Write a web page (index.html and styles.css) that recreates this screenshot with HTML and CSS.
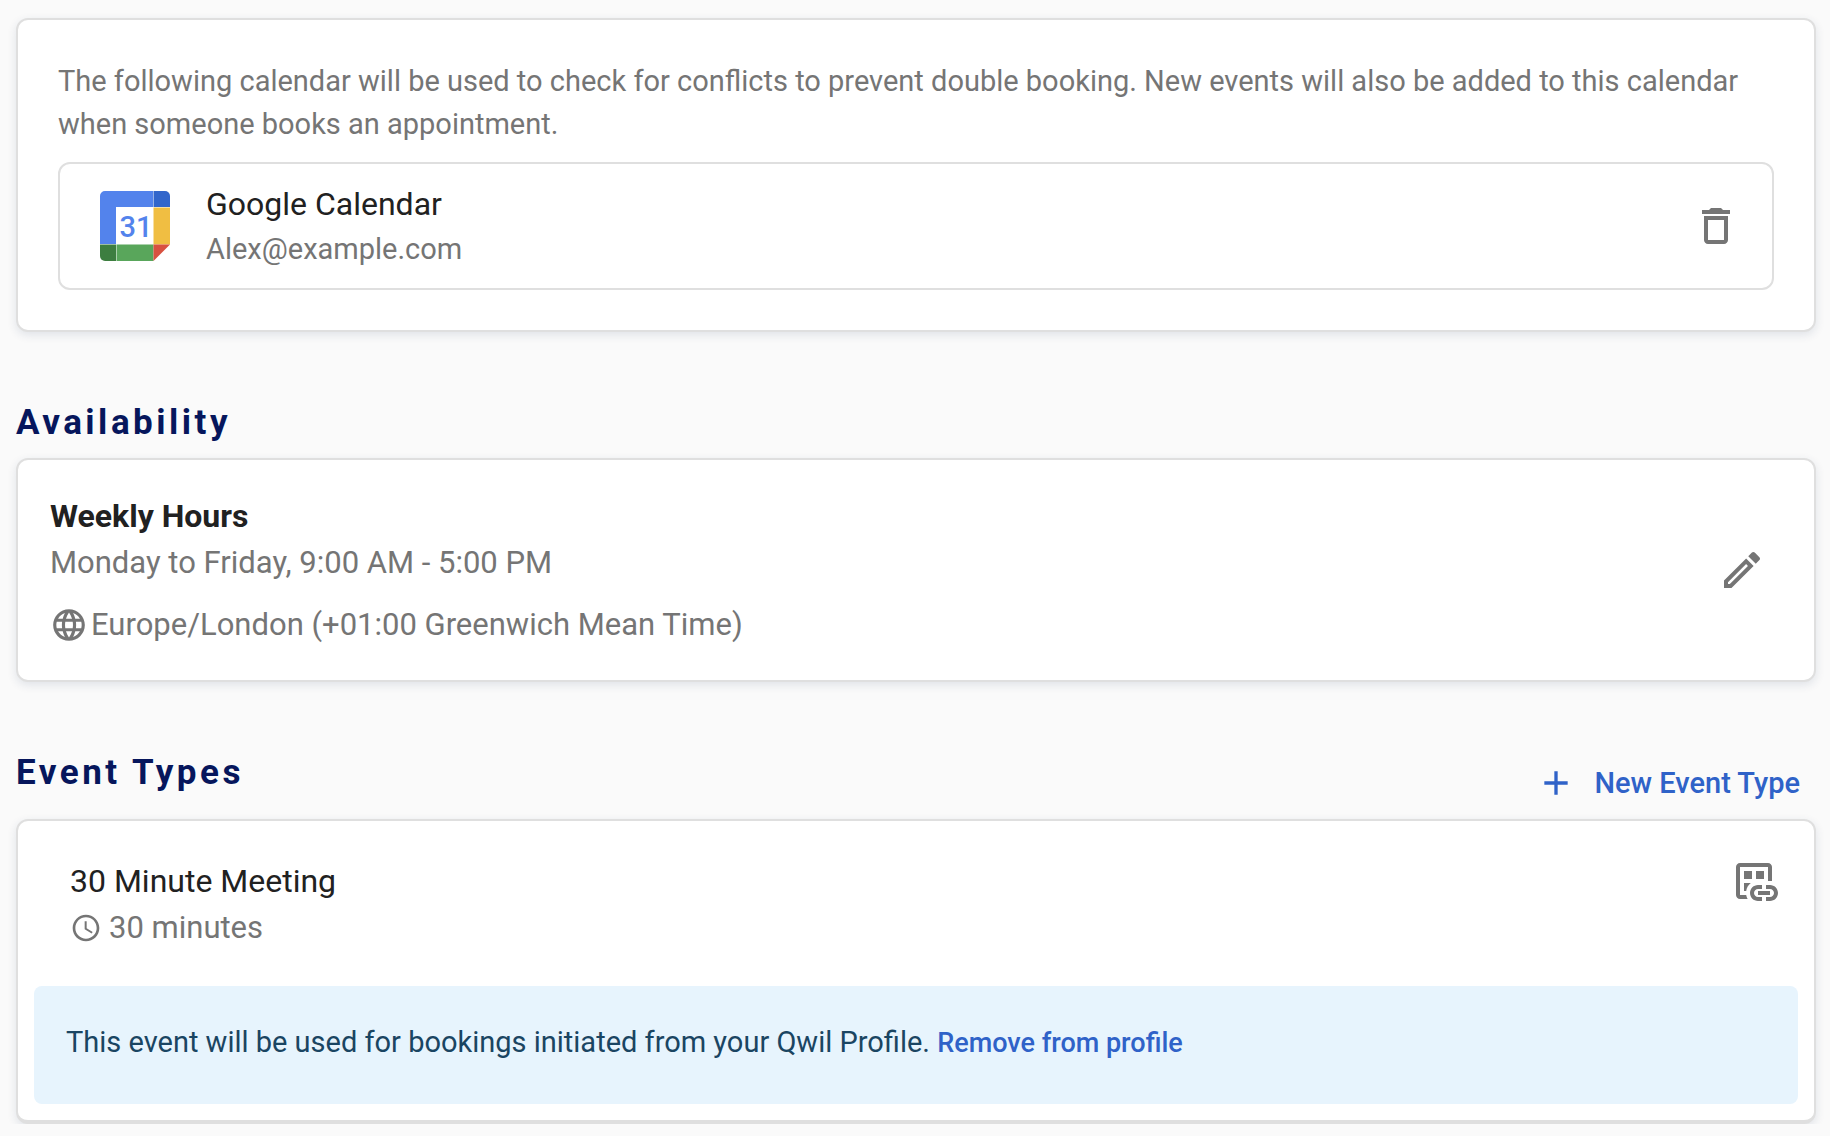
FILE: index.html
```html
<!DOCTYPE html>
<html lang="en">
<head>
<meta charset="UTF-8" />
<meta name="viewport" content="width=device-width, initial-scale=1" />
<title>Scheduling settings</title>
<link rel="stylesheet" href="styles.css">
</head>
<body>
<main class="page">

  <!-- Connected calendar -->
  <section class="card calendar-card">
    <p class="description">The following calendar will be used to check for conflicts to prevent double booking. New events will also be added to this calendar when someone books an appointment.</p>
    <div class="calendar-item">
      <svg class="calendar-logo" viewBox="0 0 70 70" aria-hidden="true">
        <path fill="#5383ec" d="M5 0h48v16H16v37H0V5a5 5 0 0 1 5-5z"/>
        <path fill="#3266cb" d="M53.5 0H65a5 5 0 0 1 5 5v11H53.5z"/>
        <path fill="#f0be42" d="M53.5 16.5H70v37H53.5z"/>
        <path fill="#3d7e40" d="M0 53.5h16V70H5a5 5 0 0 1-5-5z"/>
        <path fill="#59a65b" d="M16.5 53.5h37V70h-37z"/>
        <path fill="#d85140" d="M53.5 53.5H70L53.5 70z"/>
        <text x="36" y="46" text-anchor="middle" class="calendar-logo-day">31</text>
      </svg>
      <div class="calendar-info">
        <div class="title">Google Calendar</div>
        <div class="calendar-email">Alex@example.com</div>
      </div>
      <button type="button" class="icon-button" aria-label="Remove calendar">
        <svg class="icon" viewBox="0 0 24 24"><path d="M6 19c0 1.1.9 2 2 2h8c1.1 0 2-.9 2-2V7H6v12zM8 9h8v10H8V9zm7.5-5l-1-1h-5l-1 1H5v2h14V4z"/></svg>
      </button>
    </div>
  </section>

  <!-- Availability -->
  <div class="section-header">
    <h2>Availability</h2>
  </div>
  <section class="card availability-card">
    <div>
      <h3 class="title bold">Weekly Hours</h3>
      <div class="detail">Monday to Friday, 9:00 AM - 5:00 PM</div>
      <div class="detail timezone">
        <svg class="icon icon-globe" viewBox="0 0 24 24" aria-hidden="true"><path d="M11.99 2C6.47 2 2 6.48 2 12s4.47 10 9.99 10C17.52 22 22 17.52 22 12S17.52 2 11.99 2zm6.93 6h-2.95c-.32-1.25-.78-2.45-1.38-3.56 1.84.63 3.37 1.91 4.33 3.56zM12 4.04c.83 1.2 1.48 2.53 1.91 3.96h-3.82c.43-1.43 1.08-2.76 1.91-3.96zM4.26 14C4.1 13.36 4 12.69 4 12s.1-1.36.26-2h3.38c-.08.66-.14 1.32-.14 2s.06 1.34.14 2H4.26zm.82 2h2.95c.32 1.25.78 2.45 1.38 3.56-1.84-.63-3.37-1.9-4.33-3.56zm2.95-8H5.08c.96-1.66 2.49-2.93 4.33-3.56C8.81 5.55 8.35 6.75 8.03 8zM12 19.96c-.83-1.2-1.48-2.53-1.91-3.96h3.82c-.43 1.43-1.08 2.76-1.91 3.96zM14.34 14H9.66c-.09-.66-.16-1.32-.16-2s.07-1.35.16-2h4.68c.09.65.16 1.32.16 2s-.07 1.34-.16 2zm.25 5.56c.6-1.11 1.06-2.31 1.38-3.56h2.95c-.96 1.65-2.49 2.93-4.33 3.56zM16.36 14c.08-.66.14-1.32.14-2s-.06-1.34-.14-2h3.38c.16.64.26 1.31.26 2s-.1 1.36-.26 2h-3.38z"/></svg>
        <span>Europe/London (+01:00 Greenwich Mean Time)</span>
      </div>
    </div>
    <button type="button" class="icon-button" aria-label="Edit weekly hours">
      <svg class="icon" viewBox="0 0 24 24"><path d="M3 17.25V21h3.75L17.81 9.94l-3.75-3.75L3 17.25zM5.92 19H5v-.92l9.06-9.06.92.92L5.92 19zM20.71 5.63l-2.34-2.34c-.2-.2-.45-.29-.71-.29s-.51.1-.7.29l-1.83 1.83 3.75 3.75 1.83-1.83c.39-.39.39-1.02 0-1.41z"/></svg>
    </button>
  </section>

  <!-- Event types -->
  <div class="section-header">
    <h2>Event Types</h2>
    <button type="button" class="new-event-button">
      <svg class="icon icon-plus" viewBox="0 0 24 24" aria-hidden="true"><path d="M19 13h-6v6h-2v-6H5v-2h6V5h2v6h6v2z"/></svg>
      New Event Type
    </button>
  </div>
  <section class="card event-card">
    <div class="event-row">
      <div>
        <h3 class="title">30 Minute Meeting</h3>
        <div class="detail duration">
          <svg class="icon icon-clock" viewBox="0 0 24 24" aria-hidden="true"><path d="M11.99 2C6.47 2 2 6.48 2 12s4.47 10 9.99 10C17.52 22 22 17.52 22 12S17.52 2 11.99 2zM12 20c-4.42 0-8-3.58-8-8s3.58-8 8-8 8 3.58 8 8-3.58 8-8 8zm.5-13H11v6l5.25 3.15.75-1.23-4.5-2.67z"/></svg>
          <span>30 minutes</span>
        </div>
      </div>
      <button type="button" class="icon-button" aria-label="Booking link">
        <svg class="icon" viewBox="0 0 24 24"><path d="M8.09 19H5V5h14v7h2V5c0-1.1-.9-2-2-2H5c-1.1 0-2 .9-2 2v14c0 1.1.9 2 2 2h3.81c-.35-.61-.6-1.28-.72-2zM7 7h4v4H7zM13 7h4v4h-4zM7 13v4h1.1c.2-1.6 1-3 2.3-4zM16 20h-2c-1.1 0-2-.9-2-2s.9-2 2-2h2v-2h-2c-2.21 0-4 1.79-4 4s1.79 4 4 4h2zM20 14h-2v2h2c1.1 0 2 .9 2 2s-.9 2-2 2h-2v2h2c2.21 0 4-1.79 4-4s-1.79-4-4-4zM14 17h6v2h-6z"/></svg>
      </button>
    </div>
    <div class="alert">
      This event will be used for bookings initiated from your Qwil Profile.
      <button type="button" class="link-button">Remove from profile</button>
    </div>
  </section>

</main>
</body>
</html>
```
FILE: styles.css
```css
:root {
  --bg: #fafafa;
  --border: #dfdfdf;
  --text: #212121;
  --text-muted: #757575;
  --heading: #06165c;
  --primary: #2f62c8;
  --info-bg: #e7f4fd;
  --info-text: #1a4562;
}
* {
  box-sizing: border-box;
}
body {
  margin: 0;
  font-family: Roboto, "Liberation Sans", sans-serif;
  background-color: var(--bg);
  color: var(--text);
}
h2, h3, p {
  margin: 0;
}
button {
  padding: 0;
  border: none;
  background: none;
  font-family: inherit;
  cursor: pointer;
}
.page {
  padding: 18px 14px 0 16px;
}
.card {
  background: white;
  border: 2px solid var(--border);
  border-radius: 12px;
  box-shadow: 0 3px 10px rgb(30 60 100 / 0.12);
}
.section-header {
  display: flex;
  justify-content: space-between;
  align-items: flex-start;
  margin-top: 63px;
  margin-bottom: 7px;
}
h2 {
  font-size: 35px;
  line-height: 56px;
  letter-spacing: 0.1em;
  color: var(--heading);
}
.title {
  font-size: 32px;
  line-height: 48px;
  font-weight: 400;
}
.title.bold {
  font-weight: 700;
}
.detail {
  font-size: 31px;
  line-height: 46px;
  color: var(--text-muted);
}

/* Icons */
.icon {
  display: block;
  flex-shrink: 0;
  width: 48px;
  height: 48px;
  fill: currentColor;
}
.icon-button {
  flex-shrink: 0;
  color: var(--text-muted);
}
.icon-globe {
  width: 38px;
  height: 38px;
}
.icon-plus {
  width: 40px;
  height: 40px;
}
.icon-clock {
  width: 32px;
  height: 32px;
}

/* Calendar */
.calendar-card {
  padding: 40px;
}
.description {
  margin-bottom: 16px;
  font-size: 29px;
  line-height: 43px;
  color: var(--text-muted);
}
.calendar-item {
  display: flex;
  align-items: center;
  padding: 16px 32px 16px 40px;
  border: 2px solid var(--border);
  border-radius: 12px;
}
.calendar-logo {
  flex-shrink: 0;
  width: 70px;
  height: 70px;
}
.calendar-logo-day {
  font-size: 29px;
  font-weight: 500;
  fill: #5383ec;
}
.calendar-info {
  flex: 1;
  margin-left: 36px;
}
.calendar-email {
  padding-bottom: 2px;
  font-size: 29px;
  line-height: 42px;
  color: var(--text-muted);
}

/* Availability */
.availability-card {
  display: flex;
  justify-content: space-between;
  align-items: center;
  padding: 32px 48px 32px 32px;
}
.timezone {
  display: flex;
  align-items: center;
  gap: 3px;
  margin-top: 16px;
}

/* Event types */
.new-event-button {
  display: flex;
  align-items: center;
  gap: 18px;
  margin-top: 9px;
  padding: 9px 16px;
  font-size: 29px;
  line-height: 40px;
  font-weight: 500;
  color: var(--primary);
}
.event-card {
  padding: 0 16px 16px;
  border-bottom-width: 4px;
}
.event-row {
  display: flex;
  justify-content: space-between;
  align-items: flex-start;
  padding: 36px 20px 35px 36px;
}
.duration {
  display: flex;
  align-items: center;
  gap: 7px;
}
.alert {
  padding: 36px 32px 41px;
  border-radius: 8px;
  background: var(--info-bg);
  font-size: 29px;
  line-height: 40px;
  color: var(--info-text);
}
.link-button {
  font-size: 27px;
  line-height: 40px;
  font-weight: 500;
  color: var(--primary);
}
```
